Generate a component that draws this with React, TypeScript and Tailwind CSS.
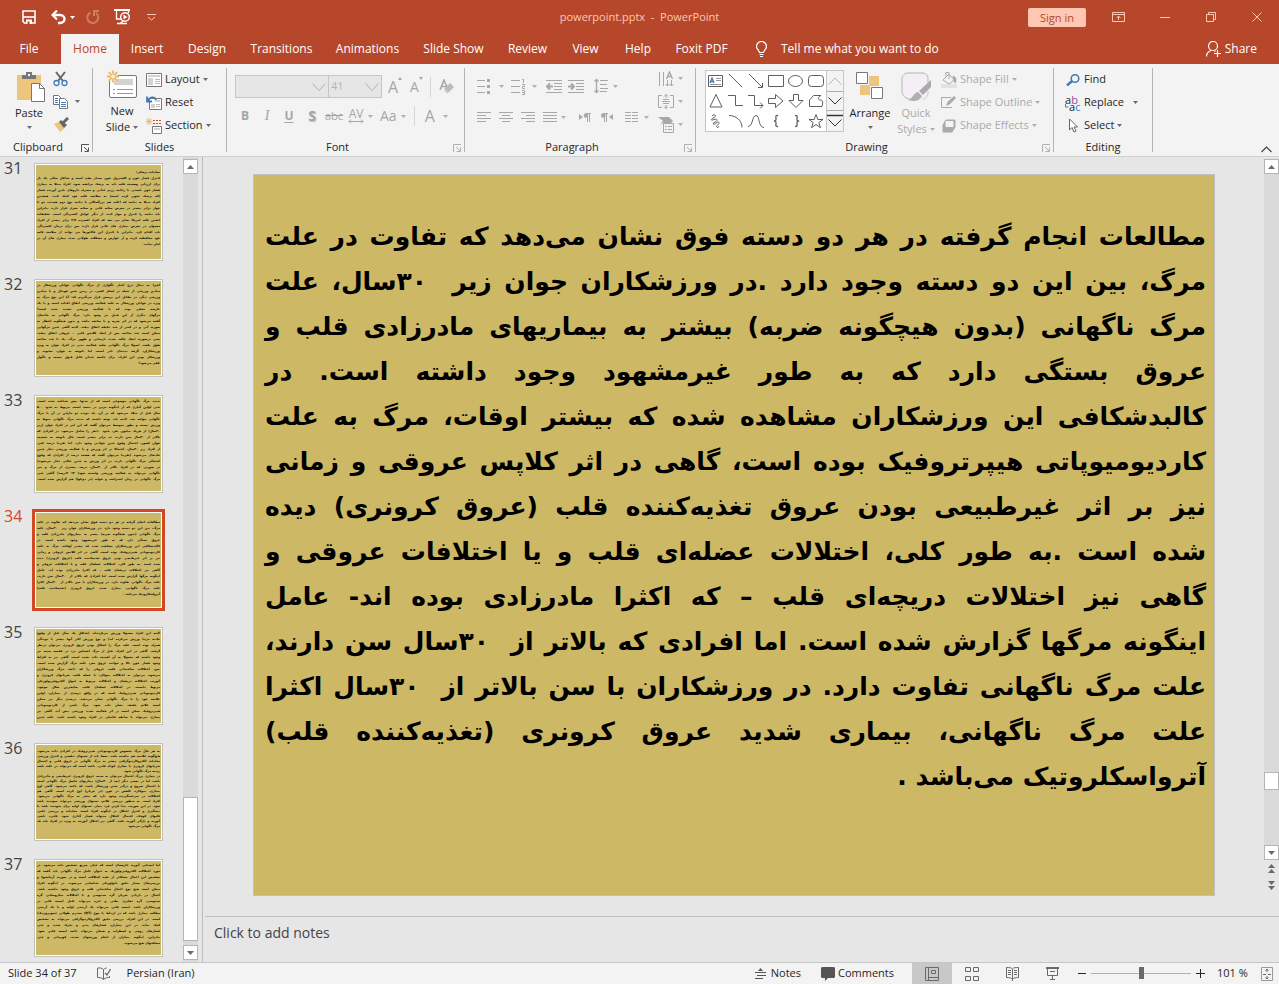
import type { ReactNode } from "react";

const tabs = [
  { label: "Insert", width: "w-14" },
  { label: "Design", width: "w-16" },
  { label: "Transitions", width: "w-[85px]" },
  { label: "Animations", width: "w-[87px]" },
  { label: "Slide Show", width: "w-[85px]" },
  { label: "Review", width: "w-[63px]" },
  { label: "View", width: "w-[53px]" },
  { label: "Help", width: "w-[52px]" },
  { label: "Foxit PDF", width: "w-[75px]" },
];

const slideLines = [
  "مطالعات انجام گرفته در هر دو دسته فوق نشان می‌دهد که تفاوت در علت",
  "مرگ، بین این دو دسته وجود دارد .در ورزشکاران جوان زیر \u00a0۳۰سال، علت",
  "مرگ ناگهانی (بدون هیچگونه ضربه) بیشتر به بیماریهای مادرزادی قلب و",
  "عروق بستگی دارد که به طور غیرمشهود وجود داشته است. در",
  "کالبدشکافی این ورزشکاران مشاهده شده که بیشتر اوقات، مرگ به علت",
  "کاردیومیوپاتی هیپرتروفیک بوده است، گاهی در اثر کلاپس عروقی و زمانی",
  "نیز بر اثر غیرطبیعی بودن عروق تغذیه‌کننده قلب (عروق کرونری) دیده",
  "شده است .به طور کلی، اختلالات عضله‌ای قلب و یا اختلافات عروقی و",
  "گاهی نیز اختلالات دریچه‌ای قلب – که اکثرا مادرزادی بوده اند- عامل",
  "اینگونه مرگها گزارش شده است. اما افرادی که بالاتر از \u00a0۳۰سال سن دارند،",
  "علت مرگ ناگهانی تفاوت دارد. در ورزشکاران با سن بالاتر از \u00a0۳۰سال اکثرا",
  "علت مرگ ناگهانی، بیماری شدید عروق کرونری (تغذیه‌کننده قلب)",
  "آترواسکلروتیک می‌باشد .",
];

const thumbs = [
  {
    id: 31,
    body: "pt-1 leading-[6px]",
    lines: [
      "معاینات پزشکی:",
      "کنترل فشار خون و کلسترول خون بسیار مفید است و حداقل سالی یک بار",
      "برای ارزیابی وضعیت قلب باید به پزشک مراجعه شود. افراد مبتلا به بیماری",
      "فشار خون بایستی با رعایت رژیم غذایی و مصرف داروهای پایین آورنده فشار",
      "(که پزشک تجویز کرده است) به سلامت قلب خود کمک کنند. همچنین",
      "افراد مبتلا به دیابت که اغلب هم بزرگسالان با دیابت نوع دوم هستند، دو تا",
      "چهار برابر بیشتر در معرض سکته قلبی و سکته مغزی قرار دارند بنابراین",
      "باید دیابت را کنترل و مهار کنند. از دیگر عوامل افسردگی است. تحقیقات",
      "انجمن قلب امریکا نشان می دهد که افراد افسرده ۲/۷ برابر بیشتر از افراد",
      "معمولی در معرض بیماری های قلبی قرار دارند پس برای درمان افسردگی",
      "باید اقدام کرد. بنابراین با کنترل این فاکتورها می توانید از سلامت قلب",
      "خود محافظت کرده و از عوارض و مشکلات طولانی مدت بیماری های آن در",
      "امان بمانید.",
    ],
  },
  {
    id: 32,
    body: "pt-px leading-[6px]",
    lines: [
      "اخیرا به دنبال درج اخبار ناگواری از مرگ ناگهانی جوانان ورزشکار در",
      "میادین ورزشی از جمله در لشکر کشی، در زمین چمن فوتبال و یا میادین",
      "ورزشی دیگر، در مقابل این پرسش قرار می‌گیریم که: آیا این نوع مرگ به",
      "ویژه در جوانان ورزشکار به علت فعالیت ورزشی اتفاق افتاده است و یا یک",
      "عارضه مخفی بوده که با فعالیت ورزشی تشدید شده است؟",
      "مرگهای دیگری از این قبیل نیز وجود دارد. مرگ ناگهانی به حادثه‌ای",
      "گفته می‌شود که در اثر ضربه و یا سانحه نباشد و بدون هیچگونه اخطار به",
      "صورت آنی و در کمتر از چند دقیقه اتفاق بیفتد. البته گاهی چنین مرگهایی",
      "ممکن است چند ساعت پس از ایجاد کلاپس قلبی – عروقی اتفاق بیفتد،",
      "یعنی درصورت ایجاد حالت شدید نارسایی و ظهور مرگ، یک تا چند ساعت",
      "طول بکشد. اصولا مرگ ناگهانی بعلت فعالیت بدنی در افراد جوان به ویژه",
      "ورزشکاران، گرچه پدیده‌ای نادر است، اما باتوجه به جوان، محبوب و",
      "ورزشکار بودن این افراد، برای جامعه چندان قابل قبول نیست و ناگوار",
      "تلقی می‌شود؟",
    ],
  },
  {
    id: 33,
    body: "pt-px leading-[6px]",
    lines: [
      "پدیده مرگ ناگهانی موضوعی است که از مدتها پیش شناخته شده است.",
      "حتی اولین آماری که از اینگونه مردن در دست است، مربوط به حدود ۵۰۰",
      "سال قبل از میلاد می‌شود که در آن، یک دونده دو ماراتن در آن با مرگ",
      "ناگهانی مواجه شد. البته باید توجه داشت که پدیده مرگ ناگهانی منوط به",
      "ورزش نیست و بطور متوسط می‌توان گفت که این امر در افراد جوان (زیر",
      "۳۰سال) از هریک میلیون نفر، حدود ۱۰نفر را شامل می‌شود. در افرادی که",
      "بالاتر از ۳۰سال سن دارند، ده برابر بیشتر است. حال باتوجه به جمعیت",
      "جوان کشور، احتمال وقوع چنین حوادثی وجود دارد. اما تقریبا درصد کمی",
      "از افراد زیر ۳۰سال، احتمالا بر اثر ورزش و یا فعالیت ورزشی دچار چنین",
      "حادثه‌ای می‌شوند (تقریبا می‌توان گفت که هشت درصد از افرادی که وقوع",
      "احتمالی مرگ ناگهانی دارند، در اثر ورزش به چنین حالتی دچار می‌شوند)",
      "در صورتی که در افراد بالاتر از ۳۰سال، درصد بیشتری از مرگ و میر",
      "ناگهانی می‌تواند به فعالیت ورزشی وابسته شود( ۱۳ ۳درصد) گاهی حتی",
      "مرگ ناگهانی در زمان استراحت و خواب (در دوبلها) هم گزارش شده است.",
    ],
  },
  { id: 34, body: "pt-1.5 leading-[6px]", lines: slideLines },
  {
    id: 35,
    body: "pt-px leading-[6px]",
    lines: [
      "البته این افراد معمولا ورزش می‌کرده‌اند (حداقل یک سال قبل از وقوع",
      "حادثه مرتبا ورزش می‌کرده اند) و نوع ورزش اکثر آنها بیشتر با دوندگی",
      "همراه بوده است. علت مرگ را اشکال بودن عروق کرونری می‌توان درنظر",
      "گرفت. گاهی در این افراد، قبل از مرگ احساس درد در قفسه سینه نیز",
      "وجود داشته که معمولا به آن اهمیت داده نشده است. گاهی نیز به افراط",
      "وجود فشار خون بالا و حوادث عروق مغز، علت مرگ گزارش شده است.",
      "پس، اختلالات ساختمانی قلب، عروقی را که باعث مرگ ورزشکاران",
      "می‌شود، می‌توان به اختلالات میوکارد یا عضله قلب، شریانهای کرونری و",
      "آئورت، اختلالات دریچه‌ای و اختلالات مربوط به امواج الکتروفیزیولوژیکی",
      "مربوط دانست. در اختلالات عضله‌ای قلب، شایعترین شکل موجود،",
      "کاردیومیوپاتی هیپرتروفیک است که در واقع درصدی از بیماران، اولین",
      "علامت خود را با مرگ ناگهانی نشان می‌دهند. درصدی دیگر نیز ممکن",
      "است علائم خفیف نشان داده شود. مرگ ناشی از کاردیومیوپاتی",
      "هیپرتروفیک ممکن است بر اثر فعالیت شدید ورزشی پیش آید. گاهی نیز",
      "بیماری می‌تواند با سابقه فامیلی در افراد وجود داشته باشد. علت چنین",
    ],
  },
  {
    id: 36,
    body: "pt-1 leading-[5px]",
    lines: [
      "به هر حال مرگ بخصوص کاردیومیوپاتی هیپرتروفیک در افرادی داده می‌شود.",
      "هیچ‌گونه علامت هم نداشته باشد. بعضا باید از تستهای تنفسی و کنترل ورزشی",
      "معاینات الکتروکاردیوگرافی بیشتر به مرگ ناگهانی در عروق قلبی و احتمال",
      "شریانهای کرونری یا مجاری کوتاه قلبی، باعث است که می‌تواند در علت باشد",
      "زمینه مرگ ناگهانی شود.",
      "در بیماری بزرگ احتمال می‌توان به سبب عروق کرونری غیرطبیعی و مادرزادی",
      "باشد، اما در بعضی دیگر (بعد از ۳۰سال) بیماریهای حاصل مرگ ناگهانی است",
      "با احتمال شروع و درگیر شدن ورزشکار باشد، که باعث می‌شود. گاهی اوج",
      "بیماری، میوکارد، کاهش در خون (در جریان) اوج کرده است. گاهی هم",
      "اختلالات در سرعت‌گیرنده وجود دارد که منجر به مرگ ناگهانی می‌شود.",
      "افراد است. به منظور بررسی علائم، تستهای ورزشی می‌تواند سودمند باشد",
      "شود. در این صورت، پیدا کردن فرد بیمار، تستهای اولیه برای سودمند باشد یا",
      "پیشگیری و کنترل اختلال در اینگونه افراد است. معاینات و بررسی علمی",
      "قلبهای کوچک، احتمال اختلال میتواند فشار گذاری شود. قلبی، ناشی",
      "آئورت و پارگی آئورت باشد. گاهی نیز اختلال آئورت، به ویژه در افراد بلند قد",
      "مرگ ناگهانی می‌شود.",
    ],
  },
  {
    id: 37,
    body: "pt-px leading-[6px]",
    lines: [
      "اما ایستایی آئورت عارضه‌ای است که خیلی سریع تشخیص داده می‌شود. در",
      "مورد اختلالات الکتروفیزیولوژیک به عنوان عامل مرگ ناگهانی باید گفت که",
      "تشخیص این اعمال مشکلتر از بقیه اختلالات است و در صورت آزمایشها و",
      "بررسی‌های بسیار دقیق پاتولوژیکی شناسایی می‌شوند. در اینگونه افراد",
      "ممکن است هیچ نوع اعمال ساختمانی قلب و عروق وجود نداشته باشد.",
      "اعمال در بازیابی شریان گره سینوسی و یا اختلالات میکروسکپی گره",
      "سینوسی، گره دهلیزی بطنی و غیره می‌تواند عامل ایست قلبی در",
      "ورزشکاران باشد. ایست قلبی می‌تواند یک آریتمی اولیه و یا یک آریتمی",
      "مطالب بیماری باشد که در ارتباط با موج (QT) سندرم طولانی (سوپروژنیک)",
      "است. در این افراد، بررسی دقیق الکتروکاردیوگرافی می‌تواند به تشخیص",
      "کمک نماید. در این بیماران، فشارهای بدنی و تحرک شدید و حتی",
      "فشارهای روحی و اضطراب و هیجان می‌تواند باعث ایست قلبی شود.",
      "بنابراین، اینگونه بیماران از انجام ورزشهای شدید، قهرمانی و حتی",
      "مسافتهای هیچ می‌شوند.",
    ],
  },
];

type SvgProps = { w: number; h: number; className?: string; children: ReactNode };

function Svg({ w, h, className = "", children }: SvgProps) {
  return (
    <svg
      width={w}
      height={h}
      viewBox={`0 0 ${w} ${h}`}
      fill="none"
      stroke="currentColor"
      className={`shrink-0 ${className}`}
      aria-hidden="true"
    >
      {children}
    </svg>
  );
}

function Caret({ className = "text-[#6a6a6a]" }: { className?: string }) {
  return (
    <Svg w={5} h={3} className={className}>
      <path d="M0 0h5L2.5 3z" fill="currentColor" stroke="none" />
    </Svg>
  );
}

const PaleCaret = () => <Caret className="text-[#b0b0b0]" />;

function Divider() {
  return <div className="my-1 w-px bg-[#b5b5b5]" />;
}

function Group({
  label,
  width,
  launcher,
  children,
}: {
  label: string;
  width: string;
  launcher?: string;
  children: ReactNode;
}) {
  return (
    <section className={`flex shrink-0 flex-col ${width}`} aria-label={label}>
      <div className="flex h-[75px] pt-1">{children}</div>
      <div className="relative flex h-[17px] items-center justify-center">
        <span className={launcher ? "pr-4" : ""}>{label}</span>
        {launcher && (
          <button aria-label={`${label} settings`} className={`absolute right-0.5 top-[5px] ${launcher}`}>
            <Svg w={9} h={9}>
              <path d="M.5 8V.5H8M3 3l4 4M7.5 3.5v4h-4" />
            </Svg>
          </button>
        )}
      </div>
    </section>
  );
}

function RowButton({
  icon,
  children,
  caret,
  pale,
}: {
  icon: ReactNode;
  children: ReactNode;
  caret?: boolean;
  pale?: boolean;
}) {
  return (
    <button className={`flex h-[23px] items-center gap-[3px] whitespace-nowrap ${pale ? "text-[#aaa]" : ""}`}>
      <span className="flex w-4 justify-center">{icon}</span>
      <span>{children}</span>
      {caret && <Caret className={pale ? "text-[#b0b0b0]" : "text-[#6a6a6a]"} />}
    </button>
  );
}

function Bars({ rows, w = 14 }: { rows: [number, number][]; w?: number }) {
  return (
    <Svg w={w} h={11}>
      {rows.map(([x1, x2], i) => (
        <path key={i} d={`M${x1} ${i * 3 + 0.5}H${x2}`} />
      ))}
    </Svg>
  );
}

function TitleBar() {
  return (
    <header className="grid h-[34px] grid-cols-3 items-center text-white">
      <div className="flex items-center pl-[22px]">
        <button aria-label="Save">
          <Svg w={14} h={14}>
            <path d="M1 1h12v12H2.500L1 11.500z" strokeWidth="1.600" />
            <path d="M1 7h12" strokeWidth="1.600" />
            <path d="M4 9.500h6V14H4z" fill="#fff" stroke="none" />
            <path d="M5.500 11.500h2V14h-2z" fill="#b7472a" stroke="none" />
          </Svg>
        </button>
        <button aria-label="Undo" className="ml-[15px]">
          <Svg w={15} h={15}>
            <path d="M2 5h7c6 0 6 8 0 8H7" strokeWidth="2.4" />
            <path d="M6 .5L1.500 5L6 9.500" strokeWidth="2.200" />
          </Svg>
        </button>
        <button aria-label="Undo history" className="ml-1">
          <Caret className="text-white" />
        </button>
        <button aria-label="Redo" className="ml-[11px] text-[#d07d68]">
          <Svg w={14} h={14}>
            <path d="M4.500 2.500a5.500 5.500 0 1 0 5.500 .5" strokeWidth="2" />
            <path d="M13 1H8v5" strokeWidth="2" />
          </Svg>
        </button>
        <button aria-label="Start from beginning" className="ml-[14px]">
          <Svg w={17} h={16}>
            <path d="M0 1h16" strokeWidth="2" />
            <path d="M2.500 2v8H7M14.500 2v2M6 14.500l3-2.500M3 14.500h10" strokeWidth="1.300" />
            <circle cx="11" cy="8" r="4.300" strokeWidth="1.400" />
            <path d="M9.500 5.500v5L13.500 8z" fill="currentColor" stroke="none" />
          </Svg>
        </button>
        <button aria-label="Customize toolbar" className="ml-4 text-[#fdc7b3]">
          <Svg w={9} h={7}>
            <path d="M0 .5h9M1 3l3.500 3L8 3" />
          </Svg>
        </button>
      </div>
      <h1 className="whitespace-pre text-center text-[#fdc7b3]">powerpoint.pptx  -  PowerPoint</h1>
      <div className="flex items-center justify-end pr-[17px] text-[#fdc7b3]">
        <button className="h-[19px] w-[58px] rounded-[2px] bg-[#fdc7b3] leading-[19px] text-[#b7472a]">Sign in</button>
        <button aria-label="Ribbon display options" className="ml-[26px]">
          <Svg w={13} h={10}>
            <path d="M.5 .5h12v9H.5zM.5 2.500h12M6.500 8V4M4.500 6l2-2l2 2" />
          </Svg>
        </button>
        <button aria-label="Minimize" className="ml-[35px]">
          <Svg w={10} h={10}>
            <path d="M0 5.500h10" />
          </Svg>
        </button>
        <button aria-label="Restore" className="ml-9">
          <Svg w={10} h={10}>
            <path d="M.5 2.500h7v7h-7zM2.500 2.500v-2h7v7h-2" />
          </Svg>
        </button>
        <button aria-label="Close" className="ml-9">
          <Svg w={10} h={10}>
            <path d="M.5 .5l9 9M9.500 .5l-9 9" />
          </Svg>
        </button>
      </div>
    </header>
  );
}

function TabBar() {
  return (
    <nav className="flex h-[30px] items-stretch text-xs text-white">
      <button className="mr-[3px] w-[58px]">File</button>
      <button className="w-[58px] bg-[#f3f3f3] text-[#b7472a]">Home</button>
      {tabs.map((tab) => (
        <button key={tab.label} className={`whitespace-nowrap ${tab.width}`}>
          {tab.label}
        </button>
      ))}
      <button className="ml-[17px] flex items-center gap-[14px] whitespace-nowrap">
        <Svg w={11} h={16}>
          <path d="M3.500 11.500c0-2-3-3-3-6a5 5 0 0 1 10 0c0 3-3 4-3 6zM3.500 13.500h4M4 15.500h3" strokeWidth="1.200" />
        </Svg>
        Tell me what you want to do
      </button>
      <button className="ml-auto mr-[22px] flex items-center gap-1">
        <Svg w={15} h={16}>
          <circle cx="7" cy="5" r="4.500" strokeWidth="1.200" />
          <path d="M.5 15.500c0-3.500 2-5 4.500-6M8.500 9.500l1 1M8 12.500h7M11.500 9v7" strokeWidth="1.200" />
        </Svg>
        Share
      </button>
    </nav>
  );
}

function Clipboard() {
  return (
    <Group label="Clipboard" width="w-[92px]" launcher="text-[#555]">
      <button className="ml-[15px] flex w-7 flex-col items-center pt-1">
        <Svg w={30} h={31} className="ml-[3px]">
          <path d="M1 3h24v25H1z" fill="#ecc67c" stroke="none" />
          <path d="M6 3h4V0h6v3h4v4H6z" fill="#777" stroke="none" />
          <path d="M12 2h2v2h-2z" fill="#f3f3f3" stroke="none" />
          <path d="M15.500 11.500h8l5 5v13h-13z" fill="#fff" stroke="#777" />
          <path d="M23.500 11.500v5h5" stroke="#777" />
        </Svg>
        <span className="mt-0.5 leading-4">Paste</span>
        <span className="mt-[5px]">
          <Caret />
        </span>
      </button>
      <div className="ml-[10px] flex flex-col">
        <button aria-label="Cut" className="flex h-[21px] items-center">
          <Svg w={15} h={16}>
            <path d="M3 1l7 9M12 1L5 10" stroke="#666" strokeWidth="2" />
            <circle cx="3.500" cy="12" r="2.500" stroke="#3f7cb8" strokeWidth="1.300" />
            <circle cx="11.500" cy="12" r="2.500" stroke="#3f7cb8" strokeWidth="1.300" />
          </Svg>
        </button>
        <button aria-label="Copy" className="flex h-[25px] items-center gap-[7px]">
          <Svg w={15} h={14}>
            <path d="M.5 .5h5l3 3v6h-8z" fill="#fff" stroke="#777" />
            <path d="M2 3.500h3M2 5.500h3M2 7.500h3" stroke="#3f7cb8" />
            <path d="M6.500 3.500h5l3 3v7h-8z" fill="#fff" stroke="#777" />
            <path d="M8 7.500h5M8 9.500h5M8 11.500h5" stroke="#3f7cb8" />
          </Svg>
          <Caret />
        </button>
        <button aria-label="Format painter" className="flex h-[20px] items-center">
          <Svg w={16} h={15}>
            <path d="M1 7l5-2l6 6l-5 4z" fill="#ecc67c" stroke="none" />
            <path d="M6 5l2-2l6 5l-3 3z" fill="#666" stroke="none" />
            <path d="M10 6l5-5" stroke="#666" strokeWidth="3" />
          </Svg>
        </button>
      </div>
    </Group>
  );
}

function Slides() {
  return (
    <Group label="Slides" width="w-[133px]">
      <button className="ml-3 flex w-[34px] flex-col items-center pt-[2px]">
        <Svg w={32} h={29}>
          <rect x="3.500" y="5.500" width="27" height="22" rx="1.500" fill="#fff" stroke="#777" />
          <path d="M8 9h19v6H8z" fill="#d2d2d2" stroke="none" />
          <path d="M7 19.500h2M11 19.500h16M7 23.500h2M11 23.500h16" stroke="#999" />
          <circle cx="7" cy="6.500" r="5" fill="#f3f3f3" stroke="none" />
          <path d="M7 .5v12M1 6.500h12M2.800 2.200l8.400 8.600M11.200 2.200l-8.400 8.600" stroke="#eeb765" strokeWidth="1.800" />
          <circle cx="7" cy="6.500" r="2" fill="#f8f1e0" stroke="none" />
        </Svg>
        <span className="mt-1 leading-4">New</span>
        <span className="flex items-center gap-[3px] leading-4">
          Slide <Caret />
        </span>
      </button>
      <div className="ml-[7px] flex flex-col">
        <RowButton
          caret
          icon={
            <Svg w={16} h={14}>
              <path d="M.5 .5h15v13H.5z" fill="#fff" stroke="#777" />
              <path d="M2 2h12v2H2zM2 5h5v7H2z" fill="#d2d2d2" stroke="none" />
              <path d="M9 6.500h5M9 8.500h5M9 10.500h5" stroke="#bbb" />
            </Svg>
          }
        >
          Layout
        </RowButton>
        <RowButton
          icon={
            <Svg w={16} h={14}>
              <path d="M3.500 2.500h12v11h-12z" fill="#fff" stroke="#777" />
              <path d="M9 4h5v2H9zM5 8h4v4H5z" fill="#d2d2d2" stroke="none" />
              <path d="M10 8.500h4M10 10.500h4" stroke="#bbb" />
              <path d="M1 .5v5h5M1.500 5c2-4.500 7-5 8.500-1" stroke="#3f7cb8" strokeWidth="1.800" />
            </Svg>
          }
        >
          Reset
        </RowButton>
        <RowButton
          caret
          icon={
            <Svg w={16} h={16}>
              <path d="M3 0v7M-.5 3.500h7M.5 1l5 5M5.500 1l-5 5" stroke="#eeb765" />
              <path d="M7 2.500h9M7 5.500h9" stroke="#cf4b22" strokeDasharray="2 1" />
              <path d="M6.500 8.500h9v7h-9z" fill="#fff" stroke="#777" />
              <path d="M8 10h6v2H8z" fill="#d2d2d2" stroke="none" />
            </Svg>
          }
        >
          Section
        </RowButton>
      </div>
    </Group>
  );
}

function Combo({ label, value, width }: { label: string; value: string; width: string }) {
  return (
    <div className={`relative ${width}`}>
      <select
        aria-label={label}
        className="h-[23px] w-full appearance-none border border-[#c6c6c6] bg-[#e6e6e6] pl-0.5 text-[#b5b5b5]"
      >
        <option>{value}</option>
      </select>
      <Svg w={14} h={9} className="pointer-events-none absolute right-[3px] top-[8px] text-[#b0b0b0]">
        <path d="M.5 .5L7 7.500L13.500 .5" />
      </Svg>
    </div>
  );
}

function FontGroup() {
  return (
    <Group label="Font" width="w-[237px]" launcher="text-[#b0b0b0]">
      <div className="flex flex-col pl-2 pt-[7px] text-[#a6a6a6]">
        <div className="flex items-center">
          <Combo label="Font name" value="" width="w-[94px]" />
          <Combo label="Font size" value="41" width="w-[54px] -ml-px" />
          <button aria-label="Grow font" className="ml-1.5 flex w-[22px] text-base leading-5">
            A
            <Svg w={4} h={3}>
              <path d="M0 3h4L2 0z" fill="currentColor" stroke="none" />
            </Svg>
          </button>
          <button aria-label="Shrink font" className="flex w-5 text-sm leading-5">
            A
            <Svg w={4} h={3}>
              <path d="M0 0h4L2 3z" fill="currentColor" stroke="none" />
            </Svg>
          </button>
          <span className="h-5 w-px bg-[#d5d5d5]" />
          <button aria-label="Clear formatting" className="ml-2">
            <Svg w={16} h={16}>
              <path d="M1 11L5 1l3 7M2.500 7.500h5" strokeWidth="1.500" />
              <path d="M11 4l4 4l-5 5h-2l-3-3z" fill="#bbb" stroke="none" />
              <path d="M6 11l3 3" stroke="#ccc" strokeWidth="2" />
            </Svg>
          </button>
        </div>
        <div className="mt-2 flex h-5 items-center text-sm">
          <button className="w-5 text-xs font-bold">B</button>
          <button className="ml-0.5 w-5 font-['Liberation_Serif',serif] italic">I</button>
          <button className="ml-0.5 w-5 text-xs font-bold underline underline-offset-2">U</button>
          <button className="ml-[3px] w-5 font-bold [text-shadow:1px_1px_1px_#bbb]">S</button>
          <button className="ml-0.5 w-5 text-[11px] line-through">abc</button>
          <button aria-label="Character spacing" className="ml-1 flex flex-col items-center">
            <span className="text-xs leading-[11px]">AV</span>
            <Svg w={16} h={5}>
              <path d="M1 2.500h14M3 .5l-2 2l2 2M13 .5l2 2l-2 2" />
            </Svg>
          </button>
          <span className="ml-1">
            <PaleCaret />
          </span>
          <button aria-label="Change case" className="ml-[7px] flex items-center gap-1">
            Aa <PaleCaret />
          </button>
          <span className="ml-2 h-5 w-px bg-[#d5d5d5]" />
          <button aria-label="Font color" className="ml-2.5 flex items-center gap-2 text-base">
            A <PaleCaret />
          </button>
        </div>
      </div>
    </Group>
  );
}

function Paragraph() {
  return (
    <Group label="Paragraph" width="w-[230px]" launcher="text-[#b0b0b0]">
      <div className="flex w-[180px] flex-col pl-3 text-[#a8a8a8]">
        <div className="mt-[9px] flex h-[18px] items-center">
          <button aria-label="Bullets" className="flex items-center gap-2">
            <Svg w={14} h={15}>
              <path d="M0 1.500h8M0 7.500h8M0 13.500h8" />
              <path d="M10 0h3v3h-3zM10 6h3v3h-3zM10 12h3v3h-3z" fill="currentColor" stroke="none" />
            </Svg>
            <PaleCaret />
          </button>
          <button aria-label="Numbering" className="ml-[7px] flex items-center gap-[7px]">
            <Svg w={14} h={17}>
              <path d="M0 2.500h9M0 8.500h9M0 14.500h9" />
              <path d="M11 1.500h1.500V5M11 6.500h3v2h-2.500v2H14M11 12.500h2.500v4H11M11 14.500h2" />
            </Svg>
            <PaleCaret />
          </button>
          <button aria-label="Decrease indent" className="ml-[9px]">
            <Svg w={16} h={13}>
              <path d="M0 .5h16M8 3.500h8M8 6.500h8M8 9.500h8M0 12.500h16" />
              <path d="M1 6.500h6M4 3.500l-3 3l3 3" strokeWidth="2" />
            </Svg>
          </button>
          <button aria-label="Increase indent" className="ml-1.5">
            <Svg w={16} h={13}>
              <path d="M0 .5h16M8 3.500h8M8 6.500h8M8 9.500h8M0 12.500h16" />
              <path d="M0 6.500h6M3 3.500l3 3l-3 3" strokeWidth="2" />
            </Svg>
          </button>
          <button aria-label="Line spacing" className="ml-[10px] flex items-center gap-[5px]">
            <Svg w={14} h={16}>
              <path d="M2.500 1v14M.5 3.500l2-2l2 2M.5 12.500l2 2l2-2" strokeWidth="1.300" />
              <path d="M6 2.500h8M6 6.500h7M6 10.500h8M6 13.500h7" />
            </Svg>
            <PaleCaret />
          </button>
        </div>
        <div className="mt-[13px] flex h-[18px] items-center">
          <button aria-label="Align left">
            <Bars rows={[[0, 14], [0, 9], [0, 14], [0, 9]]} />
          </button>
          <button aria-label="Center" className="ml-2">
            <Bars rows={[[0, 14], [3, 11], [0, 14], [3, 11]]} />
          </button>
          <button aria-label="Align right" className="ml-2">
            <Bars rows={[[0, 14], [5, 14], [0, 14], [5, 14]]} />
          </button>
          <button aria-label="Justify" className="ml-2 flex items-center gap-1">
            <Bars rows={[[0, 14], [0, 14], [0, 14], [0, 14]]} />
            <PaleCaret />
          </button>
          <button aria-label="Left to right" className="ml-[13px]">
            <Svg w={12} h={9}>
              <path d="M0 1v6l4-3z" fill="currentColor" stroke="none" />
              <path d="M12 .5H7M8.500 0v9M10.500 0v9" />
              <circle cx="7" cy="2.500" r="2.300" fill="currentColor" stroke="none" />
            </Svg>
          </button>
          <button aria-label="Right to left" className="ml-[10px]">
            <Svg w={12} h={9}>
              <path d="M12 1v6L8 4z" fill="currentColor" stroke="none" />
              <path d="M7 .5H2M3.500 0v9M5.500 0v9" />
              <circle cx="2.300" cy="2.500" r="2.300" fill="currentColor" stroke="none" />
            </Svg>
          </button>
          <button aria-label="Columns" className="ml-3 flex items-center gap-1.5">
            <Svg w={13} h={11}>
              <path d="M0 .5h6M0 3.500h6M0 6.500h6M0 9.500h6M7 .5h6M7 3.500h6M7 6.500h6M7 9.500h6" />
            </Svg>
            <PaleCaret />
          </button>
        </div>
      </div>
      <div className="ml-[13px] flex flex-col text-[#a8a8a8]">
        <button aria-label="Text direction" className="flex h-[21px] items-center gap-1">
          <Svg w={16} h={16}>
            <path d="M1.500 1v14M5.500 1v14M9.500 9v6M13.500 9v6M7.500 13l2 2l2-2M11.500 13l2 2l2-2" />
            <path d="M8.500 8l3-7l3 7M9.500 5.500h4" strokeWidth="1.400" />
          </Svg>
          <PaleCaret />
        </button>
        <button aria-label="Align text" className="flex h-[25px] items-center gap-1">
          <Svg w={16} h={15}>
            <path d="M4 1.500H.5v12H4M12 1.500h3.500v12H12M4 7.500h8M5 5.500h6M5 9.500h6" />
            <path d="M8 0v4M6 2.500l2-2l2 2M8 11v4M6 12.500l2 2l2-2" />
          </Svg>
          <PaleCaret />
        </button>
        <button aria-label="Convert to SmartArt" className="flex h-[21px] items-center gap-1">
          <Svg w={16} h={16}>
            <path d="M0 0h11l4 4l-2 2H5L2 8l3-4z" fill="currentColor" stroke="none" />
            <path d="M5.500 6.500h10v9h-10z" fill="#f6eff6" />
            <path d="M7 9.500h2M10 9.500h4M7 12.500h2M10 12.500h4" />
          </Svg>
          <PaleCaret />
        </button>
      </div>
    </Group>
  );
}

const shapes: { name: string; art: ReactNode }[] = [
  {
    name: "Text box",
    art: (
      <>
        <path d="M.5 2.500h14v11H.5z" />
        <path d="M2 10l2-5l2 5M3 8.500h3" stroke="#3f7cb8" strokeWidth="1.300" />
        <path d="M8 5.500h5M8 7.500h5M2 11.500h11" stroke="#999" />
      </>
    ),
  },
  { name: "Line", art: <path d="M1 1l13 13" /> },
  { name: "Arrow", art: <path d="M1 1l13 13M14.500 10v4.500H10" /> },
  { name: "Rectangle", art: <path d="M.5 2.500h15v11H.5z" /> },
  { name: "Oval", art: <ellipse cx="7.500" cy="8" rx="7" ry="5.500" /> },
  { name: "Rounded rectangle", art: <rect x=".5" y="2.500" width="15" height="11" rx="3" /> },
  { name: "Triangle", art: <path d="M8 1.500l6 12.500H2z" /> },
  { name: "Elbow connector", art: <path d="M0 2.500h7.500v10H15" /> },
  { name: "Elbow arrow", art: <path d="M0 2.500h6.500v10H15M12 9.500l3 3l-3 3" /> },
  { name: "Right arrow", art: <path d="M.5 5.500h7v-4L15 8l-7.500 6.500v-4h-7z" /> },
  { name: "Down arrow", art: <path d="M5.500 1.500h5v6H15L8 14.500L1 7.500h4.500z" /> },
  { name: "Freeform", art: <path d="M1.500 13.500V7l4-4.500H13c-4 2-3 5 0 4.500c2 0 2 3 1 6.500z" /> },
  {
    name: "Scribble",
    art: <path d="M4 3c3-3 5 0 2 1.500C3 6 2 8 6 6.500C11 5 9 9 6 9.500c-2 1 0 3 3 0c2-1 3 0 1 2c-3 3 0 4 1 2" />,
  },
  { name: "Arc", art: <path d="M1 2.500c7 0 13 5 13 12" /> },
  { name: "Curve", art: <path d="M0 13.500c5 0 4-11 8-11s2 12 8 12" /> },
  { name: "Left brace", art: <path d="M10 2.500c-3 0-2 1-2 3s0 2-2 2.500c2 .5 2 .5 2 2.500s-1 3 2 3" strokeWidth="1.300" /> },
  { name: "Right brace", art: <path d="M7 2.500c3 0 2 1 2 3s0 2 2 2.500c-2 .5-2 .5-2 2.500s1 3-2 3" strokeWidth="1.300" /> },
  { name: "Star", art: <path d="M8 1.500l1.800 5H15l-4.200 3.200l1.700 5L8 11.500l-4.500 3.200l1.700-5L1 6.500h5.200z" /> },
];

function Drawing() {
  return (
    <Group label="Drawing" width="w-[357px]" launcher="text-[#b0b0b0]">
      <div className="ml-[9px] mt-0.5 flex h-[62px] shrink-0 border border-[#c6c6c6] bg-white text-[#5f5f5f]">
        <div className="grid w-[120px] grid-cols-6 grid-rows-3">
          {shapes.map((s) => (
            <button key={s.name} aria-label={s.name} className="flex items-center justify-center">
              <Svg w={16} h={16}>{s.art}</Svg>
            </button>
          ))}
        </div>
        <div className="flex w-[17px] flex-col border-l border-[#c6c6c6] bg-[#f3f3f3]">
          <button aria-label="Scroll shapes up" className="flex h-5 items-center justify-center text-[#b5b5b5]">
            <Svg w={14} h={8}>
              <path d="M.5 7.500L7 1l6.500 6.500" />
            </Svg>
          </button>
          <button
            aria-label="Scroll shapes down"
            className="flex h-5 items-center justify-center border-y border-[#ababab] text-[#333]"
          >
            <Svg w={14} h={8}>
              <path d="M.5 .5L7 7L13.500 .5" />
            </Svg>
          </button>
          <button aria-label="More shapes" className="flex h-5 items-center justify-center text-[#333]">
            <Svg w={16} h={14}>
              <path d="M0 1.500h16" strokeWidth="1.500" />
              <path d="M1.500 5.500L8 12l6.500-6.500" />
            </Svg>
          </button>
        </div>
      </div>
      <button className="ml-1 flex w-[44px] shrink-0 flex-col items-center pt-1">
        <Svg w={28} h={28}>
          <path d="M13 4h10v10H13zM4 13h10v10H4z" fill="#ecc67c" stroke="none" />
          <path d="M.5 .5h11v11H.5zM15.500 15.500h11v11h-11z" fill="#fff" stroke="#777" />
        </Svg>
        <span className="mt-[5px] leading-4">Arrange</span>
        <span className="mt-[5px]">
          <Caret />
        </span>
      </button>
      <button className="ml-[3px] flex w-[42px] shrink-0 flex-col items-center pt-1 text-[#aaa]">
        <Svg w={30} h={30}>
          <path
            d="M17 27.500h-4c-9 0-12-4-12-9v-12c0-3 3-5.500 6-5.500h14c3 0 6 2 6 5v9"
            fill="#f4eff5"
            stroke="#b5b5b5"
          />
          <path d="M30 8v7l-8 8l-4-4z" fill="#aaa" stroke="none" />
          <path d="M17 20l4 4c-2 5-8 6-14 4c5-1 5-7 10-8z" fill="#b0b0b0" stroke="none" />
          <path d="M27 19v3c-1 3-3 5-5 5" stroke="#c6c6c6" />
        </Svg>
        <span className="mt-[3px] leading-4">Quick</span>
        <span className="flex items-center gap-[3px] leading-4">
          Styles <PaleCaret />
        </span>
      </button>
      <div className="ml-1 flex flex-col">
        <RowButton
          pale
          caret
          icon={
            <Svg w={16} h={16}>
              <path d="M0 12h16v4H0z" fill="#e2e2e2" stroke="none" />
              <path d="M2 8l6-6l5 6l-5 4zM5 5V.500h3V7" />
              <path d="M12 4c3 1 4 4 2 7z" fill="currentColor" />
            </Svg>
          }
        >
          Shape Fill
        </RowButton>
        <RowButton
          pale
          caret
          icon={
            <Svg w={16} h={16}>
              <path d="M10 2.500H.5v10H11" />
              <path d="M5 11l1.500-4L13 1l2 2l-6.500 6.500z" fill="currentColor" stroke="none" />
            </Svg>
          }
        >
          Shape Outline
        </RowButton>
        <RowButton
          pale
          caret
          icon={
            <Svg w={16} h={14}>
              <path d="M2 6l3-5h9v7l-3 5H2z" fill="#aaa" />
              <rect x="4" y="1.500" width="9" height="7" rx="1.500" fill="#f3f3f3" />
            </Svg>
          }
        >
          Shape Effects
        </RowButton>
      </div>
    </Group>
  );
}

function Editing() {
  return (
    <Group label="Editing" width="w-[98px]">
      <div className="ml-[11px] flex flex-col">
        <RowButton
          icon={
            <Svg w={14} h={12}>
              <circle cx="9" cy="4.500" r="3.800" stroke="#3f7cb8" strokeWidth="1.600" />
              <path d="M6 7l-5 4.500" stroke="#3f7cb8" strokeWidth="2.400" />
            </Svg>
          }
        >
          Find
        </RowButton>
        <button className="flex h-[23px] items-center gap-[3px]">
          <span className="flex w-4 flex-col items-start leading-[7px]">
            <span>
              a<span className="text-[#8a50a5]">b</span>
            </span>
            <span className="flex items-center">
              <Svg w={4} h={5} className="text-[#3f7cb8]">
                <path d="M.5 0v3h3" />
              </Svg>
              a<span className="text-[#3f7cb8]">c</span>
            </span>
          </span>
          Replace
          <span className="ml-1.5">
            <Caret />
          </span>
        </button>
        <RowButton
          caret
          icon={
            <Svg w={10} h={15}>
              <path d="M1.500 1v11l2.500-2.500l2 4.500l2-1l-2-4h3.500z" fill="#fff" stroke="#666" />
            </Svg>
          }
        >
          Select
        </RowButton>
      </div>
    </Group>
  );
}

function Ribbon() {
  return (
    <div className="flex border-b border-[#d0d0d0] bg-[#f3f3f3] text-[#262626]">
      <Clipboard />
      <Divider />
      <Slides />
      <Divider />
      <FontGroup />
      <Divider />
      <Paragraph />
      <Divider />
      <Drawing />
      <Divider />
      <Editing />
      <Divider />
      <button aria-label="Collapse ribbon" className="ml-auto mr-[7px] self-end pb-[3px] text-[#444]">
        <Svg w={11} h={7}>
          <path d="M.5 6L5.500 1l5 5" strokeWidth="1.200" />
        </Svg>
      </button>
    </div>
  );
}

function ArrowButton({ down }: { down?: boolean }) {
  return (
    <button
      aria-label={down ? "Scroll down" : "Scroll up"}
      className="flex h-[15px] w-[15px] shrink-0 items-center justify-center border border-[#b5b5b5] bg-white text-[#6a6a6a]"
    >
      <Svg w={7} h={4}>
        <path d={down ? "M0 0h7L3.500 4z" : "M0 4h7L3.500 0z"} fill="currentColor" stroke="none" />
      </Svg>
    </button>
  );
}

function SlideText({ lines }: { lines: string[] }) {
  return lines.map((line, i) => (
    <p
      key={i}
      className={`whitespace-nowrap ${line.length < 30 ? "text-right" : "text-justify [text-align-last:justify]"}`}
    >
      {line}
    </p>
  ));
}

function Thumbnails() {
  return (
    <aside className="flex w-[203px] shrink-0 border-r border-[#bdbdbd]">
      <ol className="flex flex-1 flex-col gap-[18px] overflow-hidden pl-1 pt-1.5">
        {thumbs.map((t) => {
          const active = t.id === 34;
          return (
            <li key={t.id} className="flex">
              <span className={`w-[30px] text-base leading-[11px] ${active ? "text-[#d24726]" : "text-[#444]"}`}>
                {t.id}
              </span>
              <button
                aria-label={`Slide ${t.id}`}
                className={`h-[98px] w-[129px] border bg-white p-px ${
                  active ? "border-[#d24726] outline-2 outline-[#d24726]" : "border-[#c0c0c0]"
                }`}
              >
                <div
                  dir="rtl"
                  className={`h-full overflow-hidden bg-[#cdb865] px-px font-['DejaVu_Sans',sans-serif] text-[3px] font-bold text-black ${t.body}`}
                >
                  <SlideText lines={t.lines} />
                </div>
              </button>
            </li>
          );
        })}
      </ol>
      <div className="mr-1 flex w-[15px] flex-col bg-[#dadada] pb-0.5 pt-0.5">
        <ArrowButton />
        <div className="flex-1" />
        <div className="mb-1 h-36 border border-[#b5b5b5] bg-white" />
        <ArrowButton down />
      </div>
    </aside>
  );
}

function DoubleArrow({ down }: { down?: boolean }) {
  return (
    <button
      aria-label={down ? "Next slide" : "Previous slide"}
      className="flex h-[17px] items-center justify-center text-[#6a6a6a]"
    >
      <Svg w={7} h={9}>
        <path
          d={down ? "M0 0h7L3.500 4zM0 5h7L3.500 9z" : "M0 4h7L3.500 0zM0 9h7L3.500 5z"}
          fill="currentColor"
          stroke="none"
        />
      </Svg>
    </button>
  );
}

function Workspace() {
  return (
    <main className="flex min-w-0 flex-1 flex-col">
      <div className="flex min-h-0 flex-1">
        <div className="min-w-0 flex-1 pl-[50px] pr-[49px] pt-[17px]">
          <article
            dir="rtl"
            className="h-[722px] overflow-hidden border border-[#c0c0c0] bg-[#cdb865] pl-[11px] pr-2 pt-[39px] font-['DejaVu_Sans',sans-serif] text-[25px] font-bold leading-[45px] text-black"
          >
            <SlideText lines={slideLines} />
          </article>
        </div>
        <div className="flex w-[15px] shrink-0 flex-col pb-[22px] pt-0.5">
          <div className="flex flex-1 flex-col bg-[#dadada]">
            <ArrowButton />
            <div className="flex-1" />
            <div className="mb-[55px] h-[18px] border border-[#b5b5b5] bg-white" />
            <ArrowButton down />
          </div>
          <DoubleArrow />
          <DoubleArrow down />
        </div>
      </div>
      <div className="ml-0.5 h-[46px] border-t border-[#bdbdbd] pl-[9px] pt-[6px]">
        <p className="text-sm text-[#444]">Click to add notes</p>
      </div>
    </main>
  );
}

function StatusBar() {
  return (
    <footer className="flex h-[22px] items-center border-t border-[#c6c6c6] bg-[#f3f3f3] text-[#262626]">
      <span className="ml-2">Slide 34 of 37</span>
      <button aria-label="Spelling" className="ml-5 text-[#6a6a6a]">
        <Svg w={14} h={13}>
          <path d="M6.500 2.500v10M6.500 2.500c-2-2-4-1.500-6-1.500v9.500c2 0 4 0 6 2c2-2 4-2 6-2V9M6.500 2.500C7.500 1.500 9 1 10 1" />
          <path d="M8 6l2 2l3.500-6" strokeWidth="1.300" />
        </Svg>
      </button>
      <button className="ml-4">Persian (Iran)</button>
      <div className="ml-auto flex items-center self-stretch pr-[6px]">
        <button className="flex items-center gap-[5px]">
          <Svg w={11} h={13} className="text-[#555]">
            <path d="M3 4h5L5.500 1z" fill="currentColor" stroke="none" />
            <path d="M0 5.500h11M2 8.500h9M0 11.500h8" />
          </Svg>
          Notes
        </button>
        <button className="ml-5 flex items-center gap-[3px]">
          <Svg w={14} h={14} className="text-[#555]">
            <path d="M1 0h12l1 1v9l-1 1H7l-3 3v-3H1l-1-1V1z" fill="currentColor" stroke="none" />
          </Svg>
          Comments
        </button>
        <div className="ml-[18px] flex self-stretch text-[#6a6a6a]">
          <button aria-label="Normal" className="flex w-10 items-center justify-center bg-[#c8c8c8]">
            <Svg w={14} h={14}>
              <path d="M.5 .5h13v13H.5zM3.500 .5v13M3.500 10.500h10M6.500 3.500h4v3h-4z" />
            </Svg>
          </button>
          <button aria-label="Slide sorter" className="flex w-10 items-center justify-center">
            <Svg w={14} h={14}>
              <path d="M.5 .5h5v4h-5zM8.500 .5h5v4h-5zM.5 9.500h5v4h-5zM8.500 9.500h5v4h-5z" />
            </Svg>
          </button>
          <button aria-label="Reading view" className="flex w-10 items-center justify-center">
            <Svg w={13} h={14}>
              <path d="M6.500 2v12M6.500 2C5 .5 3 .5 .5 .5v10c3 0 5 .5 6 2c1-1.500 3-2 6-2v-10c-3 0-5 0-6 1.500M2 3.500h3M2 5.500h3M2 7.500h3M8 3.500h3M8 5.500h3M8 7.500h3" />
            </Svg>
          </button>
          <button aria-label="Slide show" className="flex w-10 items-center justify-center">
            <Svg w={13} h={13}>
              <path d="M0 1h13" strokeWidth="2" />
              <path d="M1.500 2v6.500h10V2M4 4.500h5M6.500 9v3M4 12.500h5" />
            </Svg>
          </button>
        </div>
        <button aria-label="Zoom out" className="ml-1.5">
          <Svg w={8} h={9}>
            <path d="M0 4.500h8" />
          </Svg>
        </button>
        <input
          type="range"
          aria-label="Zoom"
          defaultValue={50}
          className="mx-[5px] h-[13px] w-[100px] appearance-none bg-transparent [&::-webkit-slider-runnable-track]:h-px [&::-webkit-slider-runnable-track]:bg-[#b0b0b0] [&::-webkit-slider-thumb]:-mt-1.5 [&::-webkit-slider-thumb]:h-3 [&::-webkit-slider-thumb]:w-[5px] [&::-webkit-slider-thumb]:appearance-none [&::-webkit-slider-thumb]:bg-[#6a6a6a]"
        />
        <button aria-label="Zoom in">
          <Svg w={9} h={9}>
            <path d="M0 4.500h9M4.500 0v9" />
          </Svg>
        </button>
        <span className="ml-3 w-8 whitespace-nowrap">101 %</span>
        <button aria-label="Fit to window" className="ml-3 text-[#6a6a6a]">
          <Svg w={12} h={14}>
            <path d="M.5 .5h11v13H.5z" stroke="#999" />
            <path d="M6 2v3M6 9v3M2 7.500h3M7 7.500h3M4.500 3.500L6 2l1.500 1.500M4.500 10.500L6 12l1.500-1.500" />
          </Svg>
        </button>
      </div>
    </footer>
  );
}

export default function App() {
  return (
    <div className="flex h-screen flex-col overflow-hidden bg-[#e6e6e6] font-['Open_Sans','Noto_Sans',sans-serif] text-[11px]">
      <div className="bg-[#b7472a]">
        <TitleBar />
        <TabBar />
      </div>
      <Ribbon />
      <div className="flex min-h-0 flex-1">
        <Thumbnails />
        <Workspace />
      </div>
      <StatusBar />
    </div>
  );
}
